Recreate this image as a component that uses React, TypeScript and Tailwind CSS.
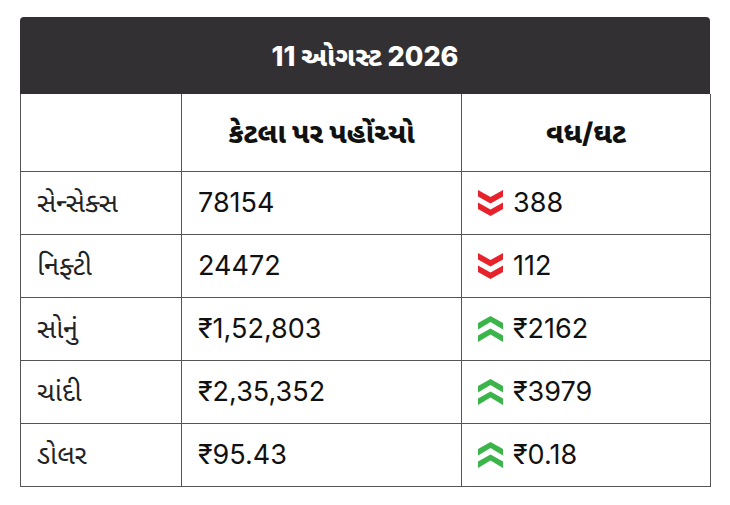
import React from "react";

const rows = [
  { name: "સેન્સેક્સ", value: "78154", change: "388", up: false },
  { name: "નિફ્ટી", value: "24472", change: "112", up: false },
  { name: "સોનું", value: "₹1,52,803", change: "₹2162", up: true },
  { name: "ચાંદી", value: "₹2,35,352", change: "₹3979", up: true },
  { name: "ડોલર", value: "₹95.43", change: "₹0.18", up: true },
];

function Chevrons({ up }: { up: boolean }) {
  return (
    <svg width="25" height="26" viewBox="0 0 25 26" className="shrink-0">
      {up ? (
        <g fill="#3bb54a">
          <polygon points="0,13.5 12.5,6 25,13.5 25,7 12.5,0 0,7" />
          <polygon points="0,26 12.5,18.5 25,26 25,19.5 12.5,12.5 0,19.5" />
        </g>
      ) : (
        <g fill="#e8222b">
          <polygon points="0,0 12.5,7 25,0 25,6.5 12.5,13.5 0,6.5" />
          <polygon points="0,12.5 12.5,19.5 25,12.5 25,19 12.5,26 0,19" />
        </g>
      )}
    </svg>
  );
}

export default function App() {
  const font = { fontFamily: 'Inter, "Noto Sans Gujarati", "Noto Sans", sans-serif' };
  return (
    <div className="w-[730px] h-[505px] bg-white pt-[17px] pl-[20px]" style={font}>
      <div className="w-[690px]">
        <div className="h-[77px] bg-[#323032] rounded-t-[4px] flex items-center justify-center text-white text-[27px] font-extrabold pt-[4px]">
          11 ઓગસ્ટ 2026
        </div>
        <div className="grid grid-cols-[161px_280px_249px] border-l border-[#555] text-[#111]">
          <div className="h-[78px] border-r border-b border-[#555]" />
          <div className="h-[78px] border-r border-b border-[#555] flex items-center justify-center text-[28px] font-extrabold">
            કેટલા પર પહોંચ્યો
          </div>
          <div className="h-[78px] border-r border-b border-[#555] flex items-center justify-center text-[28px] font-extrabold">
            વધ/ઘટ
          </div>
          {rows.map((r) => (
            <React.Fragment key={r.name}>
              <div className="h-[63px] border-r border-b border-[#555] flex items-center pl-[16px] text-[27px] text-[#222]">
                {r.name}
              </div>
              <div className="h-[63px] border-r border-b border-[#555] flex items-center pl-[16px] text-[27px]">
                {r.value}
              </div>
              <div className="h-[63px] border-r border-b border-[#555] flex items-center pl-[16px] gap-[10px] text-[27px]">
                <Chevrons up={r.up} />
                <span>{r.change}</span>
              </div>
            </React.Fragment>
          ))}
        </div>
      </div>
    </div>
  );
}
